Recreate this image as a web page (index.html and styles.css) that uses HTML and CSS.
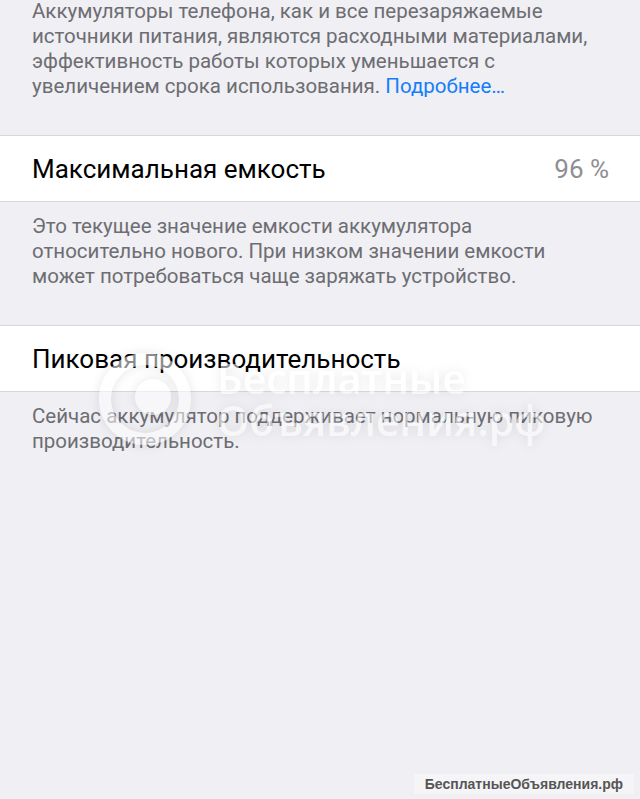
FILE: index.html
```html
<!DOCTYPE html>
<html lang="ru">
<head>
<meta charset="utf-8">
<title>Состояние аккумулятора</title>
<link rel="stylesheet" href="styles.css">
</head>
<body>
<div class="page">
  <p class="footer footer-first">Аккумуляторы телефона, как и все перезаряжаемые источники питания, являются расходными материалами, эффективность работы которых уменьшается с увеличением срока использования. <span class="link">Подробнее…</span></p>

  <div class="cell cell-first">
    <span class="cell-title">Максимальная емкость</span>
    <span class="cell-value">96 %</span>
  </div>
  <p class="footer">Это текущее значение емкости аккумулятора относительно нового. При низком значении емкости может потребоваться чаще заряжать устройство.</p>

  <div class="cell">
    <span class="cell-title">Пиковая производительность</span>
  </div>
  <p class="footer">Сейчас аккумулятор поддерживает нормальную пиковую производительность.</p>

  <div class="watermark">
    <svg class="wm-logo" width="96" height="96" viewBox="0 0 96 96">
      <circle cx="48" cy="48" r="40" fill="none" stroke="#ffffff" stroke-width="12"/>
      <circle cx="56" cy="46" r="18" fill="#ffffff"/>
    </svg>
    <div class="wm-text">
      <span>Бесплатные</span>
      <span>Объявления.рф</span>
    </div>
  </div>

  <div class="corner-mark">БесплатныеОбъявления.рф</div>
</div>
</body>
</html>
```
FILE: styles.css
```css
html, body {
  margin: 0;
  padding: 0;
}
body {
  background: #efeff4;
  font-family: Roboto, "Liberation Sans", sans-serif;
  width: 640px;
  height: 799px;
  overflow: hidden;
}
.page {
  position: relative;
  height: 799px;
}
.footer {
  margin: 0;
  padding: 12px 32px 0 32px;
  font-size: 20.5px;
  line-height: 25px;
  color: #6d6d72;
}
.footer-first {
  padding-top: 0;
  margin-top: -1px;
  height: 136px;
  box-sizing: border-box;
}
.link {
  color: #147efb;
}
.cell {
  display: flex;
  align-items: center;
  justify-content: space-between;
  height: 65px;
  background: #ffffff;
  border-top: 1px solid #d8d8dc;
  border-bottom: 1px solid #d8d8dc;
  padding: 0 31px 0 32px;
}
.cell + .footer {
  height: 123px;
  box-sizing: border-box;
}
.cell-title {
  font-size: 26px;
  color: #000000;
}
.cell-value {
  font-size: 26px;
  color: #8e8e93;
}
.watermark {
  position: absolute;
  left: 97px;
  top: 352px;
  display: flex;
  align-items: center;
  gap: 24px;
  opacity: 0.55;
  filter: drop-shadow(0 0 6px rgba(0,0,0,0.18));
  pointer-events: none;
}
.wm-text {
  display: flex;
  flex-direction: column;
  color: #ffffff;
  font-family: "Open Sans", "Liberation Sans", sans-serif;
  font-weight: 600;
  font-size: 41px;
  line-height: 42px;
}
.corner-mark {
  position: absolute;
  right: 6px;
  bottom: 4px;
  padding: 2px 11px;
  background: rgba(255,255,255,0.4);
  font-family: "Liberation Sans", Arial, sans-serif;
  font-weight: bold;
  font-size: 14px;
  color: #555555;
}
```
